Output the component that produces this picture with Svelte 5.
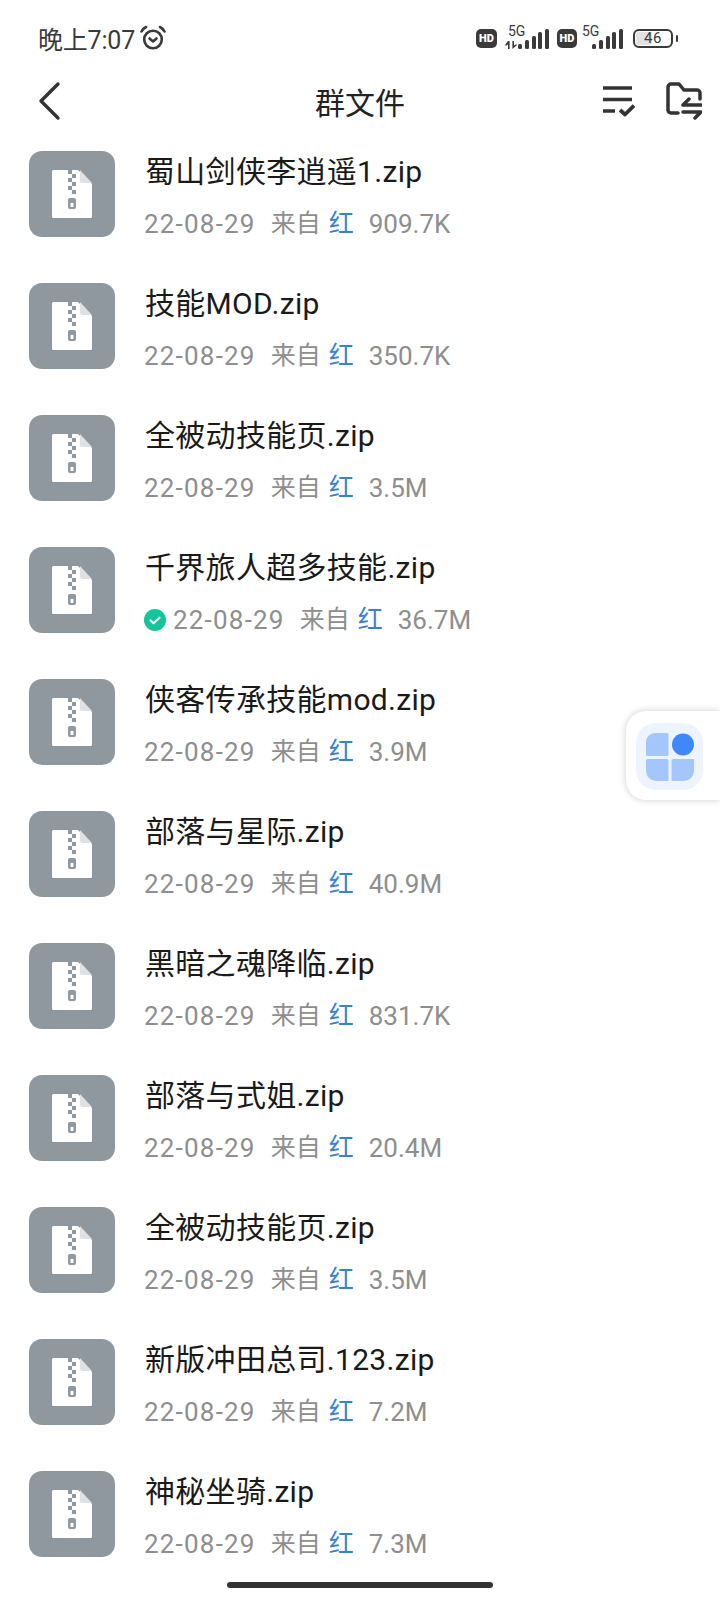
<script lang="ts">
  type FileRow = { name: string; size: string; done?: boolean }

  const files: FileRow[] = [
    { name: '蜀山剑侠李逍遥1.zip', size: '909.7K' },
    { name: '技能MOD.zip', size: '350.7K' },
    { name: '全被动技能页.zip', size: '3.5M' },
    { name: '千界旅人超多技能.zip', size: '36.7M', done: true },
    { name: '侠客传承技能mod.zip', size: '3.9M' },
    { name: '部落与星际.zip', size: '40.9M' },
    { name: '黑暗之魂降临.zip', size: '831.7K' },
    { name: '部落与式姐.zip', size: '20.4M' },
    { name: '全被动技能页.zip', size: '3.5M' },
    { name: '新版冲田总司.123.zip', size: '7.2M' },
    { name: '神秘坐骑.zip', size: '7.3M' }
  ]

  const bars = [5, 9, 13, 17, 20]
</script>

<div class="page">
  <div class="status">
    <div class="status-left">
      <span class="time">晚上7:07</span>
      <svg class="alarm" viewBox="0 0 26 26" width="26" height="26" fill="none" stroke="#3a3a3a" stroke-width="2.6" stroke-linecap="round" stroke-linejoin="round">
        <circle cx="13" cy="14.500" r="8.800" />
        <path d="M9.500 13.500l3.500 3 3.500-3" />
        <path d="M1.500 6.500C2.500 4.500 4 3 6 2M24.500 6.500C23.500 4.500 22 3 20 2" />
      </svg>
    </div>
    <div class="status-right">
      <span class="hd">HD</span>
      <div class="signal">
        <span class="five-g">5G</span>
        <svg class="arrows" viewBox="0 0 12 8" width="12" height="8" fill="#3a3a3a">
          <path d="M3 0h1.600v8H3V3.400L0.400 5V3.400zM7.400 0H9v4.600L11.600 3v1.600L7.400 8z" />
        </svg>
        <div class="bars">
          {#each bars as h}
            <i style="height: {h}px"></i>
          {/each}
        </div>
      </div>
      <span class="hd second">HD</span>
      <div class="signal plain">
        <span class="five-g">5G</span>
        <div class="bars">
          {#each bars as h}
            <i style="height: {h}px"></i>
          {/each}
        </div>
      </div>
      <div class="battery">
        <div class="battery-fill"></div>
        <span>46</span>
      </div>
      <span class="battery-tip"></span>
    </div>
  </div>

  <header class="nav">
    <svg class="back" viewBox="0 0 24 40" width="24" height="40" fill="none" stroke="#333" stroke-width="3.4" stroke-linecap="round" stroke-linejoin="round">
      <path d="M20 3L3 20l17 17" />
    </svg>
    <h1>群文件</h1>
    <div class="nav-actions">
      <svg viewBox="0 0 32 32" width="32" height="32" fill="none" stroke="#333" stroke-width="3.500" stroke-linejoin="round">
        <path d="M0 3h29M0 14.500h29M0 26h12" />
        <path d="M17 25l5 4.500 9-9" stroke-width="3.800" />
      </svg>
      <svg viewBox="0 0 36 38" width="36" height="38" fill="none" stroke="#333" stroke-width="3.500" stroke-linecap="round" stroke-linejoin="round">
        <path d="M12 31H5a3 3 0 0 1-3-3V5a3 3 0 0 1 3-3h8l5 6h13a3 3 0 0 1 3 3v6" />
        <path d="M17 23h18M23 17l-6 6" />
        <path d="M17 30h18M29 36l6-6" />
      </svg>
    </div>
  </header>

  <ul class="list">
    {#each files as file}
      <li class="row">
        <div class="thumb">
          <svg viewBox="0 0 40 48" width="40" height="48">
            <path d="M1.500 0H26l14 14v32.500a1.500 1.500 0 0 1-1.500 1.500h-37A1.500 1.500 0 0 1 0 46.500V1.500A1.500 1.500 0 0 1 1.500 0z" fill="#fff" />
            <path d="M28 0l12 13H30a2 2 0 0 1-2-2z" fill="#dfe2e5" />
            <path d="M16 0h4v4h-4zM20 4h4v4h-4zM16 8h4v4h-4zM20 12h4v4h-4zM16 16h4v4h-4zM20 20h4v4h-4z" fill="#8f979f" />
            <rect x="16" y="28" width="8" height="11" rx="2" fill="#8f979f" />
            <rect x="18.500" y="33" width="3" height="4" fill="#fff" />
          </svg>
        </div>
        <div class="info">
          <div class="name">{file.name}</div>
          <div class="meta">
            {#if file.done}
              <svg class="done" viewBox="0 0 22 22" width="22" height="22">
                <circle cx="11" cy="11" r="11" fill="#14c49a" />
                <path d="M6.500 11.500l3 2.800 6-5.600" fill="none" stroke="#fff" stroke-width="2.200" stroke-linecap="round" stroke-linejoin="round" />
              </svg>
            {/if}
            <span class="date">22-08-29</span>
            <span class="from">来自</span>
            <span class="user">红</span>
            <span class="size">{file.size}</span>
          </div>
        </div>
      </li>
    {/each}
  </ul>

  <div class="float">
    <div class="float-icon">
      <svg viewBox="0 0 50 50" width="50" height="50">
        <path d="M10 1h12a1.500 1.500 0 0 1 1.500 1.500v20a1.500 1.500 0 0 1-1.500 1.500H2.500A1.500 1.500 0 0 1 1 22.500V10a9 9 0 0 1 9-9z" fill="#a3c7fd" />
        <circle cx="38" cy="12.500" r="11" fill="#3d88fa" />
        <path d="M2.500 27h19.500a1.500 1.500 0 0 1 1.500 1.500V49H11A10 10 0 0 1 1 39V28.500A1.500 1.500 0 0 1 2.500 27z" fill="#a3c7fd" />
        <path d="M28 27h21v12a10 10 0 0 1-10 10H28a1.500 1.500 0 0 1-1.500-1.500v-19A1.500 1.500 0 0 1 28 27z" fill="#a3c7fd" />
      </svg>
    </div>
  </div>

  <div class="home-bar"></div>
</div>

<style>
  :global(body) {
    margin: 0;
    background: #fff;
  }

  .page {
    position: relative;
    width: 720px;
    height: 1600px;
    overflow: hidden;
    background: #fff;
    font-family: Roboto, "Noto Sans CJK SC", sans-serif;
  }

  .status {
    height: 76px;
    padding: 0 42px 0 38px;
    display: flex;
    align-items: center;
    justify-content: space-between;
    box-sizing: border-box;
    color: #3a3a3a;
  }

  .status-left {
    display: flex;
    align-items: center;
    gap: 5px;
  }

  .time {
    font-size: 25px;
    letter-spacing: -0.2px;
  }

  .status-right {
    display: flex;
    align-items: center;
  }

  .hd {
    width: 21px;
    height: 19px;
    border-radius: 5px;
    background: #3a3a3a;
    color: #fff;
    font-size: 11px;
    font-weight: 900;
    line-height: 19px;
    text-align: center;
    margin-right: 8px;
  }

  .hd.second {
    width: 20px;
    margin-left: 8px;
    margin-right: 0;
  }

  .signal {
    position: relative;
    display: flex;
    align-items: flex-end;
    height: 22px;
    width: 44px;
    justify-content: flex-end;
  }

  .signal.plain {
    width: 46px;
  }

  .signal.plain .five-g {
    left: 5px;
  }

  .five-g {
    position: absolute;
    left: 3px;
    top: -3px;
    font-size: 14px;
    line-height: 14px;
  }

  .arrows {
    position: absolute;
    left: 0;
    bottom: 0;
  }

  .bars {
    display: flex;
    align-items: flex-end;
    gap: 2.750px;
  }

  .bars i {
    display: block;
    width: 4px;
    background: #3a3a3a;
    border-radius: 1.500px;
  }

  .battery {
    position: relative;
    box-sizing: border-box;
    width: 40px;
    height: 19px;
    margin-left: 10px;
    border: 2px solid #3a3a3a;
    border-radius: 6px;
    display: flex;
    align-items: center;
    justify-content: center;
    overflow: hidden;
  }

  .battery-fill {
    position: absolute;
    left: 1px;
    top: 1px;
    bottom: 1px;
    width: 45%;
    background: #e2e2e2;
    border-radius: 2px;
  }

  .battery span {
    position: relative;
    font-size: 15px;
    line-height: 15px;
    letter-spacing: 0.5px;
  }

  .battery-tip {
    width: 2px;
    height: 7px;
    margin-left: 3px;
    background: #3a3a3a;
    border-radius: 1px;
  }

  .nav {
    position: relative;
    height: 50px;
    margin-bottom: 25px;
    padding: 0 18px 0 38px;
    display: flex;
    align-items: center;
    justify-content: space-between;
  }

  .nav h1 {
    position: absolute;
    left: 0;
    right: 0;
    margin: 0;
    text-align: center;
    font-size: 30px;
    font-weight: 400;
    color: #222;
  }

  .nav-actions {
    display: flex;
    align-items: center;
    gap: 31px;
  }

  .list {
    list-style: none;
    margin: 0;
    padding: 0;
  }

  .row {
    height: 132px;
    padding-left: 29px;
    display: flex;
    box-sizing: border-box;
  }

  .thumb {
    width: 86px;
    height: 86px;
    border-radius: 13px;
    background: #8f979f;
    display: flex;
    align-items: center;
    justify-content: center;
  }

  .info {
    margin-left: 30px;
  }

  .name {
    font-size: 30px;
    line-height: 44px;
    letter-spacing: 0.3px;
    margin-top: -1px;
    color: #1a1a1a;
  }

  .meta {
    display: flex;
    align-items: center;
    margin-top: 13px;
    margin-left: -1px;
    font-size: 26px;
    line-height: 34px;
    color: #8e8e8e;
  }

  .done {
    margin-right: 7px;
  }

  .date {
    letter-spacing: 1.200px;
  }

  .from {
    margin-left: 15px;
    font-size: 25px;
  }

  .user {
    margin-left: 8px;
    font-size: 25px;
    color: #3a7fd5;
  }

  .size {
    margin-left: 15px;
  }

  .float {
    position: absolute;
    right: 0;
    top: 711px;
    width: 94px;
    height: 89px;
    box-sizing: border-box;
    padding: 12px 0 0 10px;
    background: #fff;
    border-radius: 20px 0 0 20px;
    box-shadow: 0 0 7px rgba(0, 0, 0, 0.2);
  }

  .float-icon {
    width: 67px;
    height: 67px;
    border-radius: 20px;
    background: #edf4fe;
    display: flex;
    align-items: center;
    justify-content: center;
  }

  .home-bar {
    position: absolute;
    left: 227px;
    bottom: 12px;
    width: 266px;
    height: 6px;
    border-radius: 3px;
    background: #333;
  }
</style>
